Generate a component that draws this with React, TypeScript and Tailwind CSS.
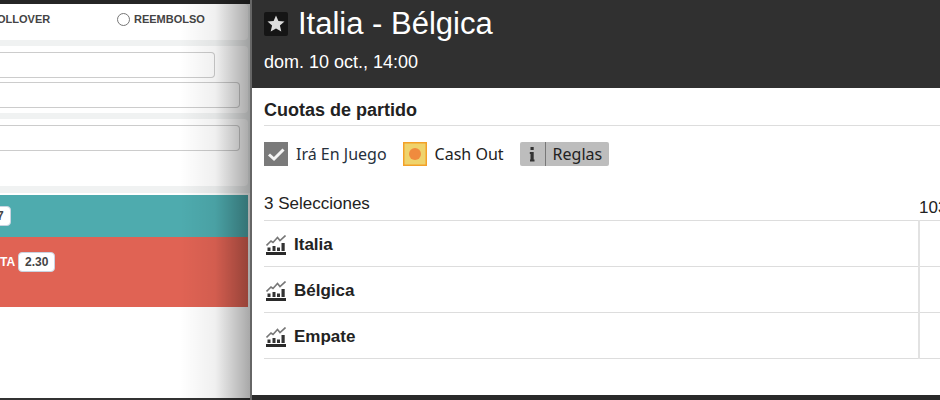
import React from "react";

interface TextFieldProps {
    label: string;
    className?: string;
}

const TextField: React.FC<TextFieldProps> = ({ label, className }) => (
    <input
        type="text"
        aria-label={label}
        className={`block h-[26px] rounded-r border border-l-0 border-[#ccc] bg-white px-2 text-xs outline-none ${className ?? ""}`}
    />
);

const OddsBadge = ({ value }: { value: string }) => (
    <span className="rounded border border-[#c9d3e0] bg-white px-1.5 text-xs leading-[18px] font-bold text-[#444]">
        {value}
    </span>
);

const StatsIcon = () => (
    <svg viewBox="0 0 20 20" className="size-5 shrink-0" aria-hidden="true">
        <path d="M0.500 10.500 L5 6 L7 7.500 L11.500 2.500 L14 5.500 L19.500 0.500" fill="none" stroke="#777" strokeWidth="1.600" />
        <path d="M1.500 12.500h3v3.500h-3zM6.500 11h3v5h-3zM11 12.500h3v3.500h-3zM15.500 8h3.200v8h-3.200z" fill="#333" />
        <path d="M0 17h20v3H0z" fill="#2a2a2a" />
    </svg>
);

const BetForm = () => (
    <aside className="relative flex w-[250px] shrink-0 flex-col overflow-hidden bg-white">
        <div className="h-1 bg-[#252525]" />
        <div className="flex flex-col gap-1.5 bg-[#f0f2f2] pr-[2px] pb-[7px]">
            <div className="flex h-9 items-start rounded-r bg-white pt-[7px] text-[11px] leading-4 font-bold text-[#444]">
                <span className="-ml-[3px] w-[120px]">OLLOVER</span>
                <label className="flex items-center gap-1">
                    <input type="radio" name="mode" className="size-[13px] appearance-none rounded-full border border-[#767676] bg-white" />
                    REEMBOLSO
                </label>
            </div>
            <div className="flex h-[67px] flex-col gap-1 rounded-r bg-white pt-[6px] pr-[8px]">
                <TextField label="Evento" className="mr-[25px]" />
                <TextField label="Mercado" />
            </div>
            <div className="h-[67px] rounded-r bg-white pt-[6px] pr-[8px]">
                <TextField label="Selección" className="w-full" />
            </div>
        </div>
        <div className="mt-[2px] mr-[2px]">
            <div className="flex h-[42px] items-center bg-[#4eabae]">
                <div className="-ml-2.5 flex"><OddsBadge value="7" /></div>
            </div>
            <div className="flex h-[70px] items-start gap-[3px] bg-[#e06354] pt-[15px] text-xs leading-5 font-bold text-white">
                <span>TA</span>
                <OddsBadge value="2.30" />
            </div>
        </div>
        <div className="mt-auto h-[2px] bg-[#333]" />
        {/* shadow cast by the event panel */}
        <div className="pointer-events-none absolute inset-y-0 right-0 w-[70px] bg-linear-to-r from-transparent via-black/6 to-black/34" />
    </aside>
);

const selections = ["Italia", "Bélgica", "Empate"];

const EventPanel = () => (
    <main className="flex min-w-0 flex-1 flex-col border-l-2 border-[#666] bg-white">
        <header className="h-[88px] bg-[#303030] pl-3 text-white">
            <div className="flex h-12 items-center gap-2">
                <button type="button" aria-label="Favorito" className="flex size-6 items-center justify-center rounded-xs bg-[#151515]">
                    <svg viewBox="0 0 18 18" className="size-[18px]" aria-hidden="true">
                        <path d="M9 0.500 L11.400 6 L17.500 6.600 L12.900 10.600 L14.300 16.500 L9 13.400 L3.700 16.500 L5.100 10.600 L0.500 6.600 L6.600 6 Z" fill="#dcdcdc" />
                    </svg>
                </button>
                <h1 className="pl-0.5 text-[31px] leading-9">Italia - Bélgica</h1>
            </div>
            <p className="pt-1 text-lg leading-5">dom. 10 oct., 14:00</p>
        </header>
        <section className="pl-3 text-[#222]">
            <h2 className="h-[38px] border-b border-[#ddd] pt-2.5 text-lg leading-6 font-bold">Cuotas de partido</h2>
            <div className="flex h-14 items-center font-['Noto_Sans',sans-serif] text-base">
                <svg viewBox="0 0 24 24" className="size-6" aria-hidden="true">
                    <path d="M0 0h24v24H0z" fill="#7a7a7a" />
                    <path d="M5 12.500 L10 17 L19.500 7.500" fill="none" stroke="#f4f4f4" strokeWidth="3" />
                </svg>
                <span className="ml-2 text-[#26303c]">Irá En Juego</span>
                <svg viewBox="0 0 24 24" className="ml-4 size-6" aria-hidden="true">
                    <path d="M0.750 0.750h22.500v22.500H0.750z" fill="#efd36c" stroke="#f3a128" strokeWidth="1.500" />
                    <circle cx="12" cy="12" r="6" fill="#f08b3e" />
                </svg>
                <span className="ml-2">Cash Out</span>
                <button type="button" className="ml-4 flex h-6 items-center rounded-xs bg-[#bdbdbd]">
                    <svg viewBox="0 0 25 24" className="h-6 w-[25px]" aria-hidden="true">
                        <path d="M10.500 5h3.200v3h-3.200zM9.800 10h3.900v7.500h0.800v2h-4.500v-2h0.500V12h-0.700z" fill="#333" />
                    </svg>
                    <span className="border-l border-[#777] px-[7px] leading-6">Reglas</span>
                </button>
            </div>
            <table className="w-full table-fixed border-collapse text-[17px] leading-5">
                <colgroup>
                    <col />
                    <col className="w-[21px]" />
                </colgroup>
                <thead>
                    <tr className="h-[38px] border-b border-[#ddd]">
                        <th className="text-left align-top font-normal">
                            <div className="pt-3">3 Selecciones</div>
                        </th>
                        <th className="pb-0.5 text-left align-bottom font-normal">103</th>
                    </tr>
                </thead>
                <tbody>
                    {selections.map((name) => (
                        <tr key={name} className="h-[46px] border-b border-[#ddd]">
                            <th scope="row" className="pt-1 pl-0.5 text-left font-bold">
                                <div className="flex items-center gap-2">
                                    <StatsIcon />
                                    {name}
                                </div>
                            </th>
                            <td className="border-l-2 border-[#e2e2e2]" />
                        </tr>
                    ))}
                </tbody>
            </table>
        </section>
        <div className="mt-auto h-[5px] bg-[#2a2a2a]" />
    </main>
);

export default function App() {
    return (
        <div className="flex min-h-screen overflow-hidden bg-white font-['Liberation_Sans',Arial,sans-serif]">
            <BetForm />
            <EventPanel />
        </div>
    );
}
